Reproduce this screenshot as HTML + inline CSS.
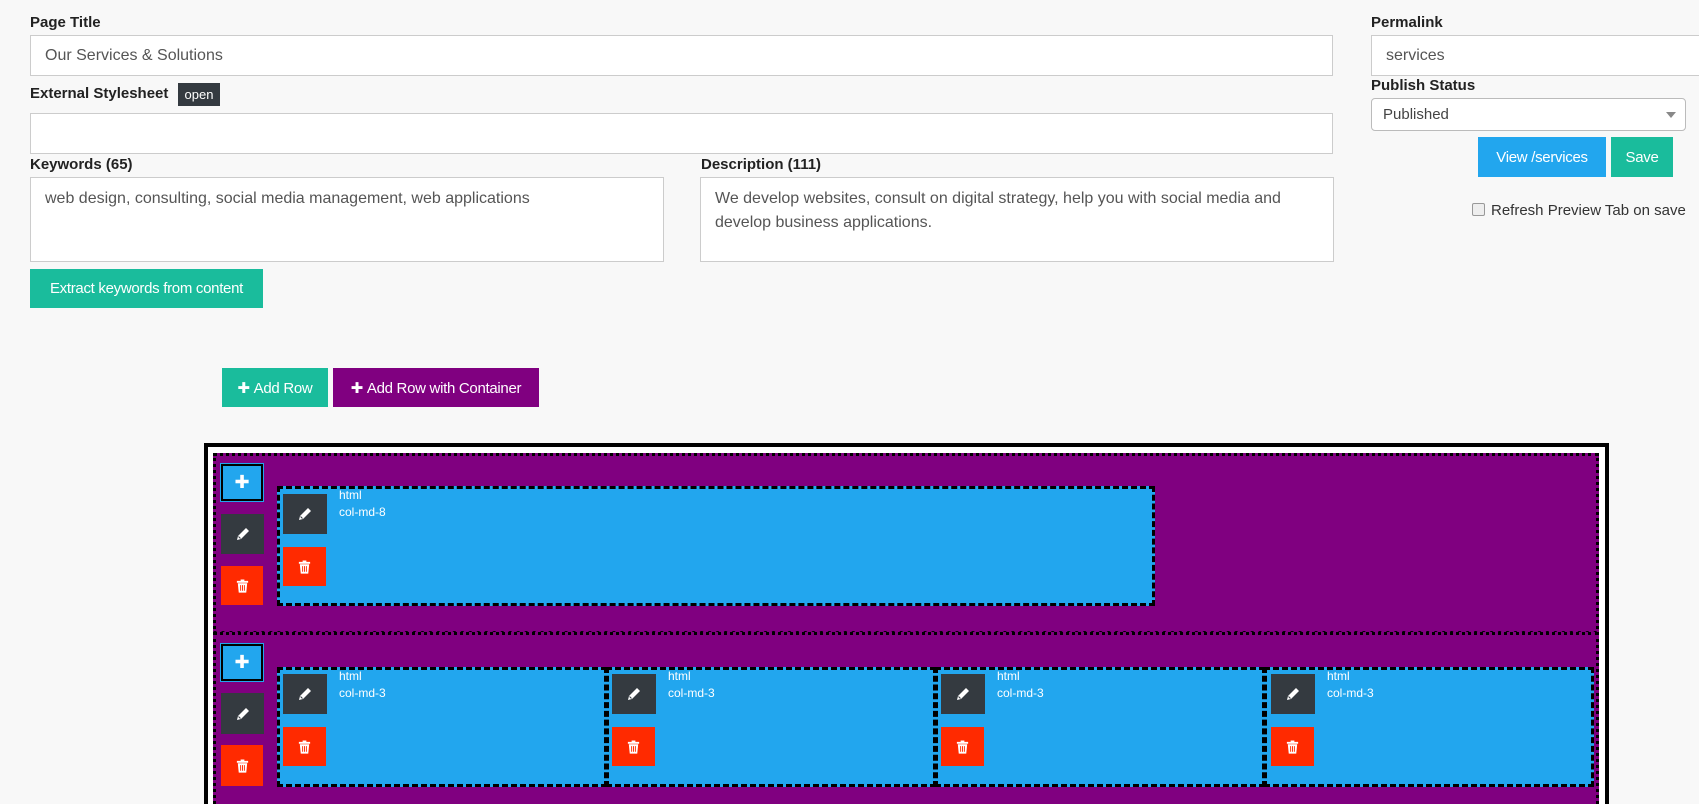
<!DOCTYPE html>
<html style="overflow:hidden;height:804px"><head><meta charset="utf-8"><style>
*{box-sizing:border-box;margin:0;padding:0}
body{width:1699px;height:804px;overflow:hidden;background:#f8f8f8;font-family:"Liberation Sans",Arial,sans-serif;color:#333;position:relative}
#w{position:absolute;left:0;top:0;width:1699px;height:804px;overflow:hidden}
.a{position:absolute}
.lbl{position:absolute;font-weight:bold;font-size:15px;color:#222}
.inp{position:absolute;background:#fff;border:1px solid #ccc;font-size:16px;color:#555;padding:0 14px;display:flex;align-items:center}
.ta{position:absolute;background:#fff;border:1px solid #ccc;font-size:16px;color:#555;padding:9px 14px;line-height:24px}
.btn{position:absolute;color:#fff;font-size:15px;display:flex;align-items:center;justify-content:center;letter-spacing:-0.3px}
.sq{position:absolute;display:flex;align-items:center;justify-content:center}
.dark{background:#343a40}.red{background:#ff2a00}.blu{background:#22a6ee}
.col{position:absolute;background:#22a6ee;border:3px dashed #000}
.ct{position:absolute;color:#fff;font-size:12px;line-height:17px}
</style></head><body><div id="w">
<div class="lbl" style="left:30px;top:14px">Page Title</div>
<div class="inp" style="left:30px;top:35px;width:1303px;height:41px">Our Services &amp; Solutions</div>
<div class="lbl" style="left:30px;top:85px">External Stylesheet</div>
<div class="a" style="left:178px;top:83px;width:42px;height:23px;background:#343a40;color:#fff;font-size:13px;display:flex;align-items:center;justify-content:center">open</div>
<div class="inp" style="left:30px;top:113px;width:1303px;height:41px"></div>
<div class="lbl" style="left:30px;top:156px">Keywords (65)</div>
<div class="lbl" style="left:701px;top:156px">Description (111)</div>
<div class="ta" style="left:30px;top:177px;width:634px;height:85px">web design, consulting, social media management, web applications</div>
<div class="ta" style="left:700px;top:177px;width:634px;height:85px">We develop websites, consult on digital strategy, help you with social media and develop business applications.</div>
<div class="btn" style="left:30px;top:269px;width:233px;height:39px;background:#1abc9c">Extract keywords from content</div>

<div class="lbl" style="left:1371px;top:14px">Permalink</div>
<div class="inp" style="left:1371px;top:35px;width:340px;height:41px">services</div>
<div class="lbl" style="left:1371px;top:77px">Publish Status</div>
<div class="inp" style="left:1371px;top:98px;width:315px;height:33px;border-radius:4px;border-color:#bbb;padding:0 11px;font-size:15px;color:#444">Published<span style="position:absolute;right:9px;top:13px;border:5px solid transparent;border-top:6px solid #888;border-bottom:0"></span></div>
<div class="btn" style="left:1478px;top:137px;width:128px;height:40px;background:#22a6ee">View /services</div>
<div class="btn" style="left:1611px;top:137px;width:62px;height:40px;background:#1abc9c">Save</div>
<div class="a" style="left:1472px;top:203px;width:13px;height:13px;border:1px solid #999;border-radius:2px;background:#eee"></div>
<div class="a" style="left:1491px;top:202px;font-size:15px;color:#333">Refresh Preview Tab on save</div>

<div class="btn" style="left:222px;top:368px;width:106px;height:39px;background:#1abc9c">✚&nbsp;Add Row</div>
<div class="btn" style="left:333px;top:368px;width:206px;height:39px;background:#800080">✚&nbsp;Add Row with Container</div>

<div class="a" style="left:204px;top:443px;width:1405px;height:450px;border:4px solid #000;background:#fff"></div>
<div class="a" style="left:213px;top:453px;width:1386px;height:182px;background:#800080;border:3px dotted #000;border-bottom:4px dotted #000"></div>
<div class="a" style="left:213px;top:632px;width:1386px;height:250px;background:#800080;border:3px dotted #000"></div>

<svg width="0" height="0" style="position:absolute"><defs>
<symbol id="pen" viewBox="0 0 16 16"><path d="M11 2l3 3-8 8-4 1 1-4z" fill="#fff"/><path d="M3.5 10.5l2 2" stroke="#343a40" stroke-width="1"/></symbol>
<symbol id="trash" viewBox="0 0 16 16"><path d="M6 1h4v1.5h4v2H2v-2h4z" fill="#fff"/><path d="M3 5h10l-1 10H4z" fill="#fff"/><path d="M6 7v6M8 7v6M10 7v6" stroke="#ff2a00" stroke-width="1"/></symbol>
</defs></svg>

<div class="sq blu" style="left:221px;top:464px;width:42px;height:37px;border:2px solid #000;outline:1px solid #22a6ee;color:#fff;font-size:18px">✚</div>
<div class="sq dark" style="left:221px;top:514px;width:43px;height:40px"><svg width="16" height="16"><use href="#pen"/></svg></div>
<div class="sq red" style="left:221px;top:566px;width:42px;height:39px"><svg width="15" height="16"><use href="#trash"/></svg></div>
<div class="col" style="left:277px;top:486px;width:878px;height:120px"></div>
<div class="sq dark" style="left:283px;top:494px;width:44px;height:40px"><svg width="16" height="16"><use href="#pen"/></svg></div>
<div class="sq red" style="left:283px;top:547px;width:43px;height:39px"><svg width="15" height="16"><use href="#trash"/></svg></div>
<div class="ct" style="left:339px;top:487px">html<br>col-md-8</div>

<div class="sq blu" style="left:221px;top:644px;width:42px;height:37px;border:2px solid #000;outline:1px solid #22a6ee;color:#fff;font-size:18px">✚</div>
<div class="sq dark" style="left:221px;top:693px;width:43px;height:41px"><svg width="16" height="16"><use href="#pen"/></svg></div>
<div class="sq red" style="left:221px;top:745px;width:42px;height:41px"><svg width="15" height="16"><use href="#trash"/></svg></div>

<div class="col" style="left:277px;top:667px;width:330px;height:120px"></div>
<div class="col" style="left:606px;top:667px;width:330px;height:120px"></div>
<div class="col" style="left:935px;top:667px;width:330px;height:120px"></div>
<div class="col" style="left:1264px;top:667px;width:330px;height:120px"></div>

<div class="sq dark" style="left:283px;top:674px;width:44px;height:40px"><svg width="16" height="16"><use href="#pen"/></svg></div>
<div class="sq red" style="left:283px;top:727px;width:43px;height:39px"><svg width="15" height="16"><use href="#trash"/></svg></div>
<div class="ct" style="left:339px;top:668px">html<br>col-md-3</div>

<div class="sq dark" style="left:612px;top:674px;width:44px;height:40px"><svg width="16" height="16"><use href="#pen"/></svg></div>
<div class="sq red" style="left:612px;top:727px;width:43px;height:39px"><svg width="15" height="16"><use href="#trash"/></svg></div>
<div class="ct" style="left:668px;top:668px">html<br>col-md-3</div>

<div class="sq dark" style="left:941px;top:674px;width:44px;height:40px"><svg width="16" height="16"><use href="#pen"/></svg></div>
<div class="sq red" style="left:941px;top:727px;width:43px;height:39px"><svg width="15" height="16"><use href="#trash"/></svg></div>
<div class="ct" style="left:997px;top:668px">html<br>col-md-3</div>

<div class="sq dark" style="left:1271px;top:674px;width:44px;height:40px"><svg width="16" height="16"><use href="#pen"/></svg></div>
<div class="sq red" style="left:1271px;top:727px;width:43px;height:39px"><svg width="15" height="16"><use href="#trash"/></svg></div>
<div class="ct" style="left:1327px;top:668px">html<br>col-md-3</div>
</div></body></html>
